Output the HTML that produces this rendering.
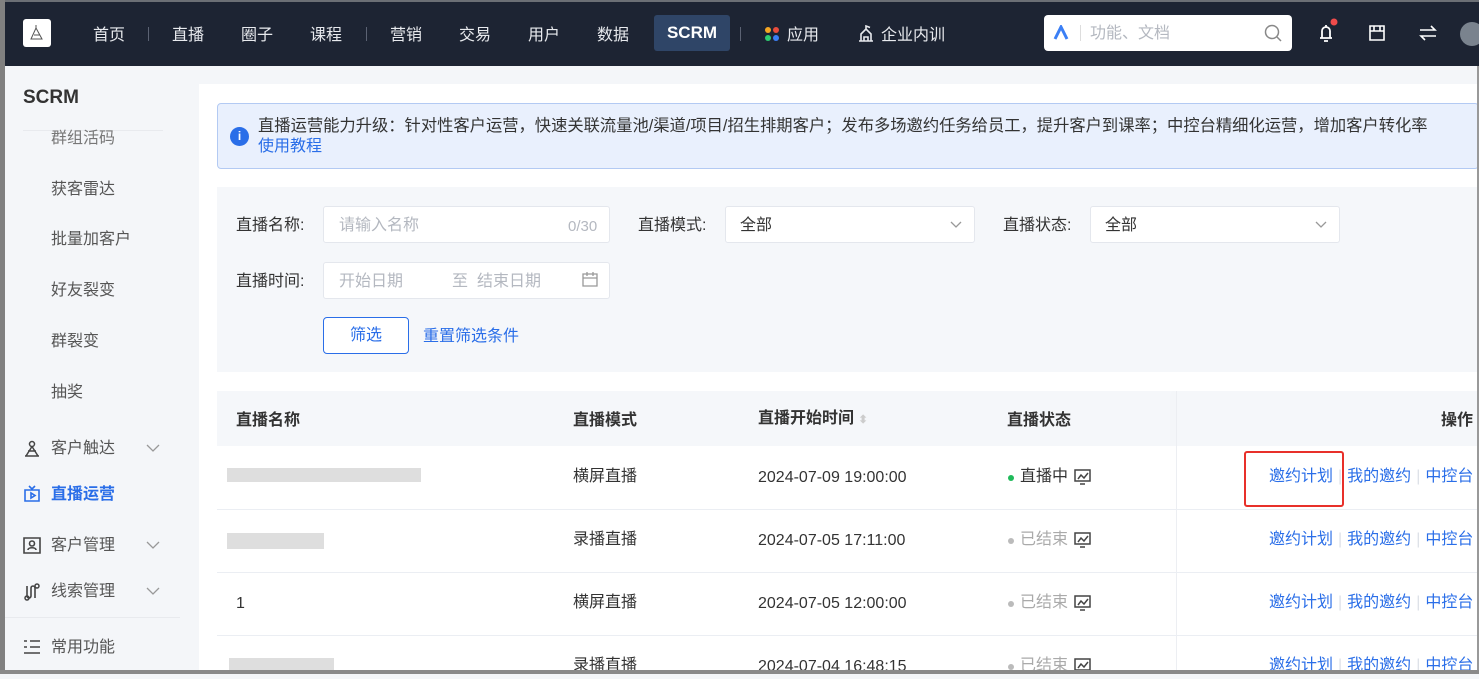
<!DOCTYPE html>
<html><head><meta charset="utf-8">
<style>
*{margin:0;padding:0;box-sizing:border-box}
body{width:1479px;height:674px;overflow:hidden;background:#f4f6f9;font-family:"Liberation Sans","Noto Sans CJK SC",sans-serif;color:#333;position:relative;font-size:16px;line-height:24px}
.a{position:absolute}
.top{left:0;top:0;width:1479px;height:66px;background:#1d2433;border-top:2px solid #6b6f75}
.nav{color:#e8eaee;font-size:16px;top:24px}
.sep{width:1px;height:14px;background:#5b6273;top:27px}
.side{color:#555;font-size:16px}
.blue{color:#2a6ee8}
.inp{background:#fff;border:1px solid #e4e7ed;border-radius:3px;height:37px}
.ph{color:#b4b8c0}
.th{font-weight:bold;color:#333;font-size:16px}
.row{left:217px;width:1262px;height:1px;background:#ebeef3}
.lk{color:#2a6ee8;font-size:16px}
.bar{color:#dde1e8;margin:0 5px}
.blur{background:#d6d6d6}
</style></head><body>
<div class="a" style="left:0;top:0;width:5px;height:674px;background:#808080;z-index:9"></div>
<div class="a" style="left:0;top:670px;width:1479px;height:4px;background:#8a8a8a;z-index:9"></div>
<div class="a top"></div>
<div class="a" style="left:23px;top:19px;width:28px;height:28px;background:#fff;border-radius:3px"><svg width="28" height="28"><path d="M8 20 L13 9 L19 20 Z M11 16h6M13 6v3" stroke="#555" fill="none"/></svg></div>
<div class="a nav" style="left:93px">首页</div><div class="a sep" style="left:148px"></div>
<div class="a nav" style="left:172px">直播</div>
<div class="a nav" style="left:241px">圈子</div>
<div class="a nav" style="left:310px">课程</div><div class="a sep" style="left:366px"></div>
<div class="a nav" style="left:390px">营销</div>
<div class="a nav" style="left:459px">交易</div>
<div class="a nav" style="left:528px">用户</div>
<div class="a nav" style="left:597px">数据</div>
<div class="a" style="left:654px;top:15px;width:76px;height:36px;background:#2f4567;border-radius:3px;color:#fff;font-weight:bold;font-size:17px;text-align:center;line-height:36px">SCRM</div>
<div class="a sep" style="left:740px"></div>
<div class="a" style="left:765px;top:27px;width:14px;height:14px"><div class="a" style="left:0;top:0;width:6px;height:6px;border-radius:3px;background:#f5a623"></div><div class="a" style="left:8px;top:0;width:6px;height:6px;border-radius:3px;background:#e84c3d"></div><div class="a" style="left:0;top:8px;width:6px;height:6px;border-radius:3px;background:#2ecc71"></div><div class="a" style="left:8px;top:8px;width:6px;height:6px;border-radius:3px;background:#3b7ff5"></div></div>
<div class="a nav" style="left:787px">应用</div>
<svg class="a" style="left:857px;top:25px" width="18" height="18"><path d="M2 16h14M4 16V9l5-5 5 5v7M9 4V1l4 1.5M7 16v-4h4v4" stroke="#e8eaee" stroke-width="1.6" fill="none"/></svg>
<div class="a nav" style="left:881px">企业内训</div>
<div class="a" style="left:1044px;top:15px;width:248px;height:36px;background:#fff;border-radius:4px"></div>
<svg class="a" style="left:1053px;top:25px" width="16" height="16"><path d="M2 14L8 2l6 12" stroke="#3b7ff5" stroke-width="3" fill="none"/></svg>
<div class="a" style="left:1080px;top:25px;width:1px;height:16px;background:#ddd"></div>
<div class="a ph" style="left:1090px;top:22px;font-size:16px">功能、文档</div>
<svg class="a" style="left:1264px;top:24px" width="18" height="18"><circle cx="8" cy="8" r="6.5" stroke="#888" stroke-width="1.5" fill="none"/><path d="M13 13l4 4" stroke="#888" stroke-width="1.5"/></svg>
<svg class="a" style="left:1316px;top:18px" width="22" height="26"><path d="M4 20h12M6 20V13a4 4 0 018 0v7M10 9V7M8 23h4" stroke="#fff" stroke-width="1.8" fill="none"/><circle cx="18" cy="4" r="3.5" fill="#f04b4b"/></svg>
<svg class="a" style="left:1368px;top:24px" width="18" height="18"><path d="M2 2h14v14H2zM2 7h14M6 2v5M12 2v5" stroke="#fff" stroke-width="1.6" fill="none"/></svg>
<svg class="a" style="left:1418px;top:24px" width="20" height="18"><path d="M2 6h15l-4-4M18 12H3l4 4" stroke="#fff" stroke-width="1.6" fill="none"/></svg>
<div class="a" style="left:1460px;top:22px;width:24px;height:24px;border-radius:12px;background:#7a838e"></div>

<div class="a" style="left:23px;top:86px;font-size:19px;font-weight:bold;color:#333">SCRM</div>
<div class="a" style="left:23px;top:130px;width:140px;height:1px;background:#e8eaee"></div>
<div class="a side" style="left:51px;top:127px;color:#777">群组活码</div>
<div class="a side" style="left:51px;top:178px">获客雷达</div>
<div class="a side" style="left:51px;top:228px">批量加客户</div>
<div class="a side" style="left:51px;top:279px">好友裂变</div>
<div class="a side" style="left:51px;top:330px">群裂变</div>
<div class="a side" style="left:51px;top:381px">抽奖</div>
<svg class="a" style="left:23px;top:440px" width="18" height="18"><circle cx="9" cy="4" r="2.5" stroke="#444" stroke-width="1.5" fill="none"/><path d="M9 6.5L3 16M9 6.5l6 9.5M2 16h14M5 11h8" stroke="#444" stroke-width="1.5" fill="none"/></svg>
<div class="a side" style="left:51px;top:437px">客户触达</div>
<svg class="a" style="left:146px;top:444px" width="14" height="9"><path d="M1 1l6 6 6-6" stroke="#999" stroke-width="1.3" fill="none"/></svg>
<svg class="a" style="left:23px;top:485px" width="18" height="18"><path d="M2 5h14v11H2zM6 1l3 3 3-3M8 8v5l4-2.5z" stroke="#2a6ee8" stroke-width="1.6" fill="none"/></svg>
<div class="a side blue" style="left:51px;top:483px;font-weight:bold">直播运营</div>
<svg class="a" style="left:23px;top:537px" width="18" height="17"><path d="M1 1h16v15H1zM5 13c0-3 8-3 8 0M9 4a2.5 2.5 0 100 5 2.5 2.5 0 000-5" stroke="#444" stroke-width="1.6" fill="none"/></svg>
<div class="a side" style="left:51px;top:534px">客户管理</div>
<svg class="a" style="left:146px;top:541px" width="14" height="9"><path d="M1 1l6 6 6-6" stroke="#999" stroke-width="1.3" fill="none"/></svg>
<svg class="a" style="left:23px;top:583px" width="18" height="18"><path d="M4 3v10a2 2 0 004 0V5a2 2 0 014 0v10" stroke="#444" stroke-width="1.6" fill="none"/><circle cx="4" cy="15" r="2" stroke="#444" fill="none" stroke-width="1.5"/><circle cx="14" cy="3" r="2" stroke="#444" fill="none" stroke-width="1.5"/></svg>
<div class="a side" style="left:51px;top:580px">线索管理</div>
<svg class="a" style="left:146px;top:587px" width="14" height="9"><path d="M1 1l6 6 6-6" stroke="#999" stroke-width="1.3" fill="none"/></svg>
<div class="a" style="left:5px;top:617px;width:175px;height:1px;background:#e8eaee"></div>
<svg class="a" style="left:23px;top:639px" width="18" height="16"><path d="M1 2h3M7 2h10M1 8h3M7 8h10M1 14h16" stroke="#444" stroke-width="1.6"/></svg>
<div class="a side" style="left:51px;top:636px">常用功能</div>

<div class="a" style="left:199px;top:84px;width:1280px;height:590px;background:#fff"></div>
<div class="a" style="left:217px;top:103px;width:1262px;height:66px;background:#e9f0fd;border:1px solid #b3caf3;border-radius:4px"></div>
<div class="a" style="left:230px;top:127px;width:19px;height:19px;border-radius:10px;background:#2a6ee8;color:#fff;font-size:12px;font-weight:bold;text-align:center;line-height:19px">i</div>
<div class="a" style="left:258px;top:114px;font-size:16.3px;color:#333;white-space:nowrap">直播运营能力升级：针对性客户运营，快速关联流量池/渠道/项目/招生排期客户；发布多场邀约任务给员工，提升客户到课率；中控台精细化运营，增加客户转化率</div>
<div class="a blue" style="left:258px;top:135px;font-size:16px">使用教程</div>

<div class="a" style="left:217px;top:187px;width:1262px;height:185px;background:#f5f7fa"></div>
<div class="a" style="left:236px;top:214px">直播名称:</div>
<div class="a inp" style="left:323px;top:206px;width:287px"></div>
<div class="a ph" style="left:339px;top:214px">请输入名称</div><div class="a ph" style="left:568px;top:215px;font-size:15px">0/30</div>
<div class="a" style="left:638px;top:214px">直播模式:</div>
<div class="a inp" style="left:725px;top:206px;width:250px"></div>
<div class="a" style="left:740px;top:214px">全部</div>
<svg class="a" style="left:950px;top:221px" width="12" height="8"><path d="M1 1l5 5 5-5" stroke="#999" stroke-width="1.3" fill="none"/></svg>
<div class="a" style="left:1003px;top:214px">直播状态:</div>
<div class="a inp" style="left:1090px;top:206px;width:250px"></div>
<div class="a" style="left:1105px;top:214px">全部</div>
<svg class="a" style="left:1315px;top:221px" width="12" height="8"><path d="M1 1l5 5 5-5" stroke="#999" stroke-width="1.3" fill="none"/></svg>
<div class="a" style="left:236px;top:270px">直播时间:</div>
<div class="a inp" style="left:323px;top:262px;width:287px"></div>
<div class="a ph" style="left:339px;top:270px">开始日期</div><div class="a ph" style="left:452px;top:270px">至</div><div class="a ph" style="left:477px;top:270px">结束日期</div>
<svg class="a" style="left:582px;top:271px" width="16" height="16"><path d="M1 3h14v12H1zM1 7h14M5 1v4M11 1v4" stroke="#999" stroke-width="1.3" fill="none"/></svg>
<div class="a" style="left:323px;top:317px;width:86px;height:37px;border:1px solid #2a6ee8;border-radius:4px;background:#fff;color:#2a6ee8;text-align:center;line-height:35px">筛选</div>
<div class="a blue" style="left:423px;top:325px">重置筛选条件</div>

<div class="a" style="left:217px;top:391px;width:1262px;height:55px;background:#f5f7fa"></div>
<div class="a" style="left:1176px;top:391px;width:1px;height:283px;background:#eceef2;box-shadow:-3px 0 6px rgba(0,0,0,0.05)"></div>
<div class="a th" style="left:236px;top:409px">直播名称</div>
<div class="a th" style="left:573px;top:409px">直播模式</div>
<div class="a th" style="left:758px;top:407px">直播开始时间 <span style="color:#ccc;font-size:11px">⬍</span></div>
<div class="a th" style="left:1007px;top:409px">直播状态</div>
<div class="a th" style="left:1441px;top:409px">操作</div>
<div class="a row" style="top:509px"></div><div class="a row" style="top:572px"></div><div class="a row" style="top:635px"></div>

<div class="a blur" style="left:227px;top:468px;width:194px;height:14px;opacity:.8"></div>
<div class="a blur" style="left:227px;top:533px;width:97px;height:16px;opacity:.8"></div>
<div class="a" style="left:236px;top:592px">1</div>
<div class="a blur" style="left:229px;top:658px;width:105px;height:12px;opacity:.8"></div>

<div class="a" style="left:573px;top:465px">横屏直播</div>
<div class="a" style="left:573px;top:528px">录播直播</div>
<div class="a" style="left:573px;top:591px">横屏直播</div>
<div class="a" style="left:573px;top:654px">录播直播</div>
<div class="a" style="left:758px;top:466px">2024-07-09 19:00:00</div>
<div class="a" style="left:758px;top:529px">2024-07-05 17:11:00</div>
<div class="a" style="left:758px;top:592px">2024-07-05 12:00:00</div>
<div class="a" style="left:758px;top:655px">2024-07-04 16:48:15</div>

<div class="a" style="left:1008px;top:475px;width:6px;height:6px;border-radius:3px;background:#1fba5a"></div>
<div class="a" style="left:1020px;top:465px">直播中</div>
<div class="a" style="left:1008px;top:538px;width:6px;height:6px;border-radius:3px;background:#bbb"></div>
<div class="a" style="left:1020px;top:528px;color:#aaa">已结束</div>
<div class="a" style="left:1008px;top:601px;width:6px;height:6px;border-radius:3px;background:#bbb"></div>
<div class="a" style="left:1020px;top:591px;color:#aaa">已结束</div>
<div class="a" style="left:1008px;top:664px;width:6px;height:6px;border-radius:3px;background:#bbb"></div>
<div class="a" style="left:1020px;top:654px;color:#aaa">已结束</div>
<svg class="a" style="left:1074px;top:469px" width="17" height="16"><path d="M1 1h15v11H1zM4 10l3-4 3 3 4-5M6 15h5" stroke="#444" stroke-width="1.5" fill="none"/></svg>
<svg class="a" style="left:1074px;top:532px" width="17" height="16"><path d="M1 1h15v11H1zM4 10l3-4 3 3 4-5M6 15h5" stroke="#444" stroke-width="1.5" fill="none"/></svg>
<svg class="a" style="left:1074px;top:595px" width="17" height="16"><path d="M1 1h15v11H1zM4 10l3-4 3 3 4-5M6 15h5" stroke="#444" stroke-width="1.5" fill="none"/></svg>
<svg class="a" style="left:1074px;top:658px" width="17" height="16"><path d="M1 1h15v11H1zM4 10l3-4 3 3 4-5M6 15h5" stroke="#444" stroke-width="1.5" fill="none"/></svg>

<div class="a lk" style="left:1269px;top:465px;white-space:nowrap">邀约计划<span class="bar">|</span>我的邀约<span class="bar">|</span>中控台</div>
<div class="a lk" style="left:1269px;top:528px;white-space:nowrap">邀约计划<span class="bar">|</span>我的邀约<span class="bar">|</span>中控台</div>
<div class="a lk" style="left:1269px;top:591px;white-space:nowrap">邀约计划<span class="bar">|</span>我的邀约<span class="bar">|</span>中控台</div>
<div class="a lk" style="left:1269px;top:654px;white-space:nowrap">邀约计划<span class="bar">|</span>我的邀约<span class="bar">|</span>中控台</div>
<div class="a" style="left:1244px;top:451px;width:100px;height:56px;border:2px solid #e8302a;border-radius:3px"></div>
<div class="a" style="left:1477px;top:66px;width:2px;height:608px;background:#999"></div>
</body></html>
